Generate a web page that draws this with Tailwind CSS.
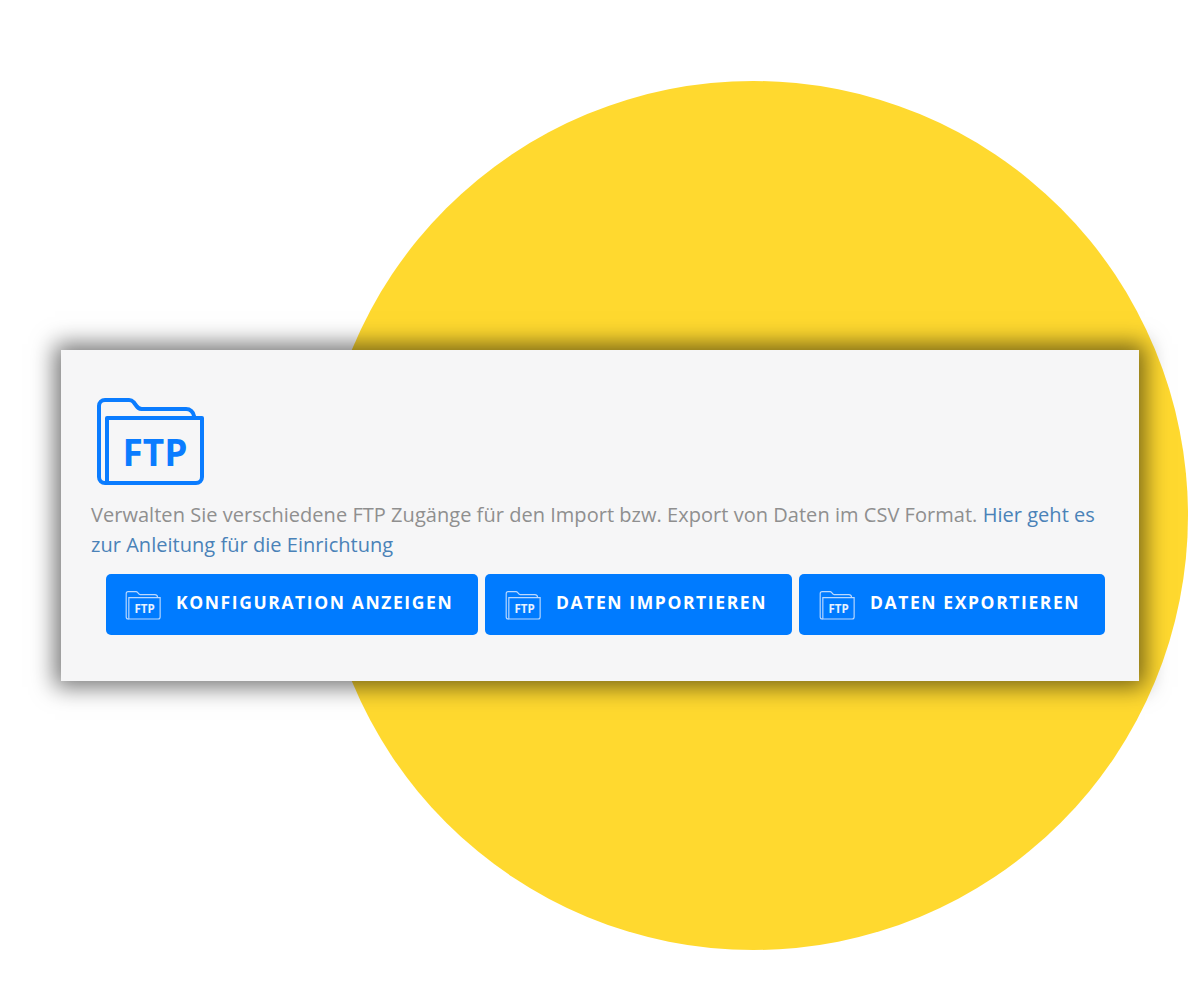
<!DOCTYPE html>
<html lang="de">

<head>
    <meta charset="UTF-8">
    <title>FTP Zugänge</title>
    <script src="https://cdn.jsdelivr.net/npm/@tailwindcss/browser@4"></script>
</head>

<body class="bg-white font-['Open_Sans',sans-serif]">
    <div class="relative w-[1200px] h-[1000px] overflow-hidden pt-[350px] pl-[61px]">
        <!-- yellow circle behind the card -->
        <div class="absolute left-[319px] top-[81px] w-[869px] h-[869px] rounded-full bg-[#ffd92f]"></div>

        <!-- Card -->
        <div class="relative w-[1078px] h-[331px] bg-[#f6f6f7] shadow-[0_0_22px_6px_rgba(0,0,0,0.55)] pt-[48px] pl-[30px]">
            <svg class="w-[108px] h-[88px] ml-[5px]" viewBox="0 0 108 88" fill="none">
                <path d="M11 85H9a6 6 0 0 1-6-6V8a6 6 0 0 1 6-6h24a6 6 0 0 1 4.500 2l3 4a7 7 0 0 0 5 3H90a8 8 0 0 1 8 7v2" stroke="#0a7cff" stroke-width="4" stroke-linejoin="round" />
                <path d="M11 20H106V79a6 6 0 0 1-6 6H11Z" stroke="#0a7cff" stroke-width="4" stroke-linejoin="round" />
                <text x="59" y="68" text-anchor="middle" fill="#0a7cff" font-family="Open Sans" font-weight="700" font-size="37">FTP</text>
            </svg>
            <p class="mt-[14px] w-[1020px] text-[20px] leading-[30px] tracking-[0.035px] text-[#8f8f8f]">
                Verwalten Sie verschiedene FTP Zugänge für den Import bzw. Export von Daten im CSV Format.
                <a href="#" class="text-[#4a82b8]">Hier geht es zur Anleitung für die Einrichtung</a>
            </p>
            <div class="flex gap-[7px] mt-[14px] ml-[15px]">
                <button class="flex items-center w-[372px] h-[61px] pl-[19px] pb-[4px] bg-[#007bff] rounded-[5px] text-white font-bold text-[17.500px] tracking-[1.600px]">
                    <svg class="w-[36px] h-[29px] mr-[15px] mt-[5px]" viewBox="0 0 108 88" fill="none">
                        <path d="M11 85H9a6 6 0 0 1-6-6V8a6 6 0 0 1 6-6h24a6 6 0 0 1 4.500 2l3 4a7 7 0 0 0 5 3H90a8 8 0 0 1 8 7v2" stroke="#b9d8ff" stroke-width="3.500" />
                        <path d="M11 20H106V79a6 6 0 0 1-6 6H11Z" stroke="#b9d8ff" stroke-width="3.500" />
                        <text x="59" y="66" text-anchor="middle" fill="#e6f1ff" font-family="Open Sans" font-weight="700" font-size="35" letter-spacing="0">FTP</text>
                    </svg>
                    KONFIGURATION ANZEIGEN
                </button>
                <button class="flex items-center w-[307px] h-[61px] pl-[20px] pb-[4px] bg-[#007bff] rounded-[5px] text-white font-bold text-[17.500px] tracking-[1.600px]">
                    <svg class="w-[36px] h-[29px] mr-[15px] mt-[5px]" viewBox="0 0 108 88" fill="none">
                        <path d="M11 85H9a6 6 0 0 1-6-6V8a6 6 0 0 1 6-6h24a6 6 0 0 1 4.500 2l3 4a7 7 0 0 0 5 3H90a8 8 0 0 1 8 7v2" stroke="#b9d8ff" stroke-width="3.500" />
                        <path d="M11 20H106V79a6 6 0 0 1-6 6H11Z" stroke="#b9d8ff" stroke-width="3.500" />
                        <text x="59" y="66" text-anchor="middle" fill="#e6f1ff" font-family="Open Sans" font-weight="700" font-size="35" letter-spacing="0">FTP</text>
                    </svg>
                    DATEN IMPORTIEREN
                </button>
                <button class="flex items-center w-[306px] h-[61px] pl-[20px] pb-[4px] bg-[#007bff] rounded-[5px] text-white font-bold text-[17.500px] tracking-[1.600px]">
                    <svg class="w-[36px] h-[29px] mr-[15px] mt-[5px]" viewBox="0 0 108 88" fill="none">
                        <path d="M11 85H9a6 6 0 0 1-6-6V8a6 6 0 0 1 6-6h24a6 6 0 0 1 4.500 2l3 4a7 7 0 0 0 5 3H90a8 8 0 0 1 8 7v2" stroke="#b9d8ff" stroke-width="3.500" />
                        <path d="M11 20H106V79a6 6 0 0 1-6 6H11Z" stroke="#b9d8ff" stroke-width="3.500" />
                        <text x="59" y="66" text-anchor="middle" fill="#e6f1ff" font-family="Open Sans" font-weight="700" font-size="35" letter-spacing="0">FTP</text>
                    </svg>
                    DATEN EXPORTIEREN
                </button>
            </div>
        </div>
    </div>
</body>

</html>
